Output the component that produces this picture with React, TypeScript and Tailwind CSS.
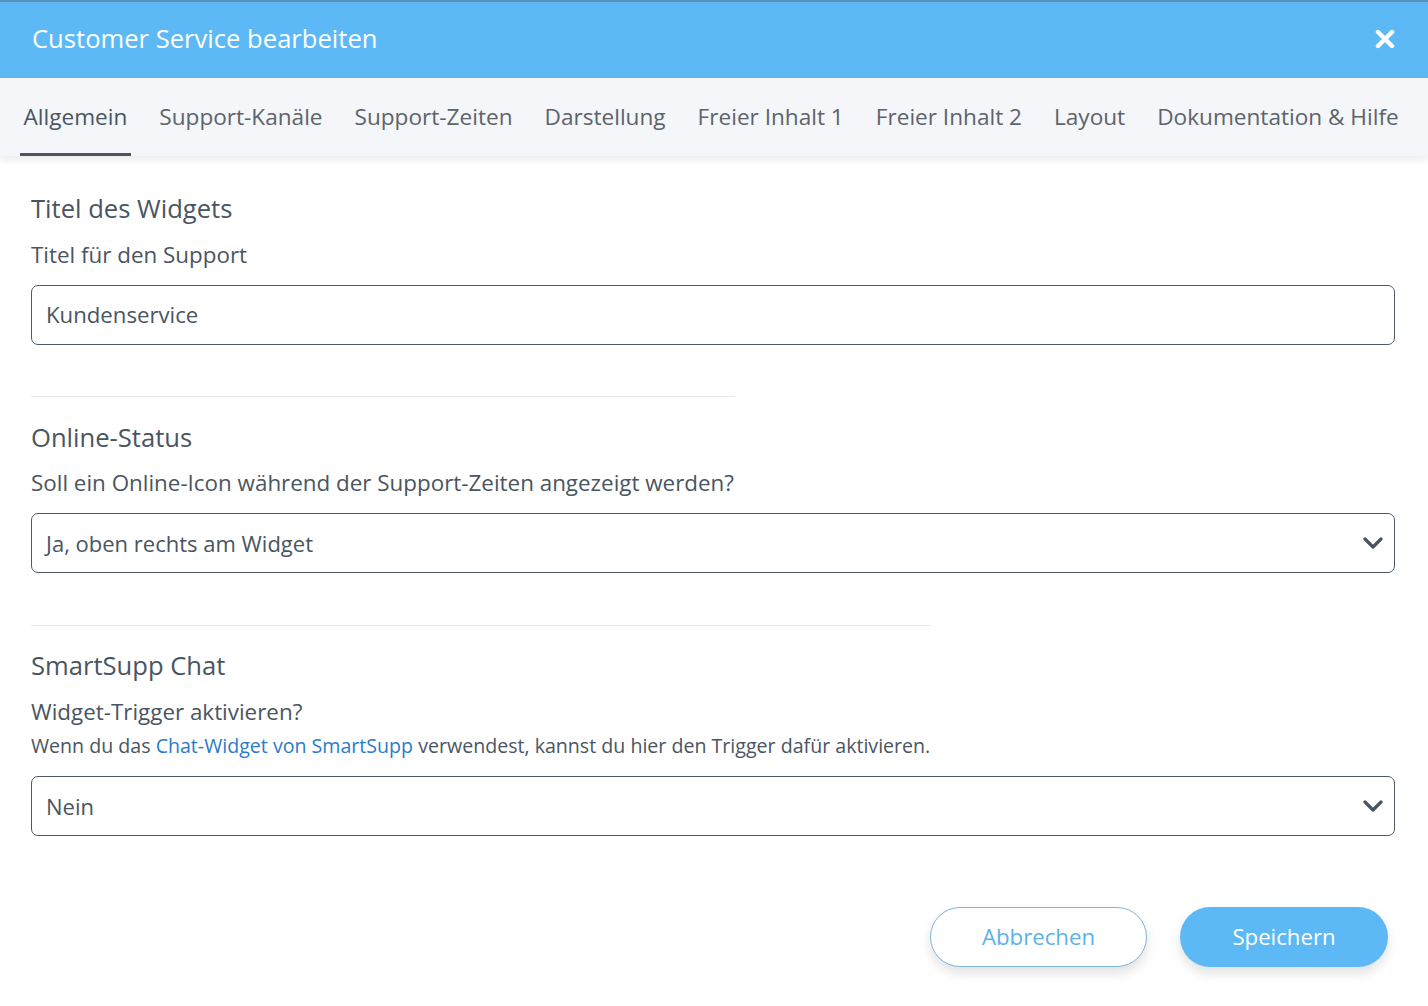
import React from 'react';

const tabs = [
  'Allgemein',
  'Support-Kanäle',
  'Support-Zeiten',
  'Darstellung',
  'Freier Inhalt 1',
  'Freier Inhalt 2',
  'Layout',
  'Dokumentation & Hilfe',
];

function Chevron() {
  return (
    <svg width="20" height="14" viewBox="0 0 20 14" className="shrink-0">
      <polyline points="2,3 10,11 18,3" fill="none" stroke="#4a5562" strokeWidth="3.2" strokeLinecap="round" strokeLinejoin="round" />
    </svg>
  );
}

function SelectBox({ value }: { value: string }) {
  return (
    <div className="flex h-[60px] items-center justify-between rounded-[7px] border border-[#4f5963] bg-white pl-[14px] pr-[11px] text-[22px] text-[#4a5562]">
      <span>{value}</span>
      <Chevron />
    </div>
  );
}

export default function App() {
  return (
    <div className="min-h-[1006px] w-full bg-white font-['Open_Sans',sans-serif] text-[#4a5562]">
      <div className="h-[2px] bg-[#5a8fb9]" />
      <header className="flex h-[76px] items-center justify-between bg-[#5cb9f5] pb-[3px] pl-8 pr-[33px]">
        <h1 className="text-[25.6px] leading-none text-white">Customer Service bearbeiten</h1>
        <svg width="20" height="20" viewBox="0 0 20 20">
          <path d="M3 3 L17 17 M17 3 L3 17" stroke="white" strokeWidth="4.4" strokeLinecap="round" />
        </svg>
      </header>

      <nav className="relative flex h-[78px] items-stretch gap-[25px] bg-[#f4f6f9] pl-5 shadow-[0_4px_8px_rgba(0,0,0,0.08)]">
        {tabs.map((t, i) => (
          <div
            key={t}
            className={
              i === 0
                ? 'flex items-center border-b-[3px] border-[#4a5562] px-[3.5px] pt-[3px] text-[22.6px] text-[#4a5562]'
                : 'flex items-center border-b-[3px] border-transparent px-[3.5px] pt-[3px] text-[22.6px] text-[#5d636b]'
            }
          >
            {t}
          </div>
        ))}
      </nav>

      <main className="pl-[31px] pr-[33px] pt-[35px]">
        <section>
          <h2 className="text-[25.6px] leading-[36px]">Titel des Widgets</h2>
          <p className="mt-[13px] text-[22.4px] leading-[30px]">Titel für den Support</p>
          <div className="mt-[15px] flex h-[60px] items-center rounded-[7px] border border-[#4f5963] pl-[14px] text-[22.2px]">
            Kundenservice
          </div>
        </section>

        <div className="mt-[51px] h-px w-[704px] bg-[#e6e8ea]" />

        <section className="mt-[23px]">
          <h2 className="text-[25.6px] leading-[36px]">Online-Status</h2>
          <p className="mt-[12px] text-[22.4px] leading-[30px]">Soll ein Online-Icon während der Support-Zeiten angezeigt werden?</p>
          <div className="mt-[15px]">
            <SelectBox value="Ja, oben rechts am Widget" />
          </div>
        </section>

        <div className="mt-[52px] h-px w-[900px] bg-[#e6e8ea]" />

        <section className="mt-[22px]">
          <h2 className="text-[25.6px] leading-[36px]">SmartSupp Chat</h2>
          <p className="mt-[13px] text-[22.4px] leading-[30px]">Widget-Trigger aktivieren?</p>
          <p className="mt-[6px] text-[19.6px] leading-[26px]">
            Wenn du das <a className="text-[#2b7bc9]">Chat-Widget von SmartSupp</a> verwendest, kannst du hier den Trigger dafür aktivieren.
          </p>
          <div className="mt-[17px]">
            <SelectBox value="Nein" />
          </div>
        </section>

        <div className="mt-[71px] flex justify-end gap-[33px] pr-[7px]">
          <button
            type="button"
            className="h-[60px] w-[217px] rounded-full border border-[#7fb5dc] bg-white text-[22.2px] text-[#5cb2ea] shadow-[0_6px_12px_rgba(0,0,0,0.12)]"
          >
            Abbrechen
          </button>
          <button
            type="button"
            className="h-[60px] w-[208px] rounded-full bg-[#5cb9f5] text-[22.2px] text-white shadow-[0_6px_12px_rgba(0,0,0,0.12)]"
          >
            Speichern
          </button>
        </div>
      </main>
    </div>
  );
}
